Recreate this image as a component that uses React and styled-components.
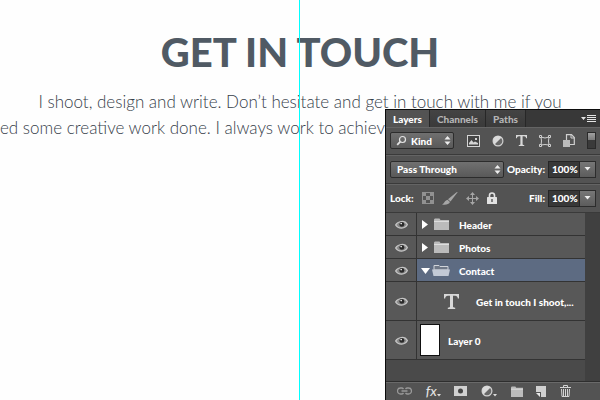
import React from 'react'
import styled, { createGlobalStyle } from 'styled-components'

const GlobalStyle = createGlobalStyle`
    * {
        box-sizing: border-box;
    }

    body {
        margin: 0;
        background: #fefefe;
        overflow: hidden;
    }

    button, select, input {
        font: inherit;
        color: inherit;
        margin: 0;
    }
`

const Page = styled.main`
    position: relative;
    height: 100vh;
    overflow: hidden;
    padding-top: 32px;
    font-family: Lato, sans-serif;
    color: #505a64;
`

const Title = styled.h1`
    margin: 0;
    font-size: 40px;
    font-weight: 900;
    line-height: 40px;
    text-align: center;
`

const Copy = styled.p`
    margin: 17px 0 0;
    font-size: 17px;
    font-weight: 300;
    line-height: 26px;
    text-align: center;
    white-space: nowrap;
    color: #36404a;
`

const Line = styled.span`
    display: block;
    text-align: ${({ $align }) => $align || 'center'};
`

const Guide = styled.div`
    position: absolute;
    top: 0;
    bottom: 0;
    left: 50%;
    margin-left: -1px;
    width: 1px;
    background: #00ffff;
`

// floats above the canvas, docked to the bottom right corner
const Panel = styled.section`
    position: absolute;
    top: 109px;
    right: 0;
    bottom: 0;
    width: 215px;
    display: flex;
    flex-direction: column;
    border-top: 1px solid #0c0c0c;
    border-left: 1px solid #0c0c0c;
    background: #535353;
    color: #fff;
    font-family: Lato, sans-serif;
    font-size: 10px;
    font-weight: 900;
    line-height: 14px;
`

const Tabs = styled.div`
    display: flex;
    height: 17px;
    background: #383838;
`

const Tab = styled.button`
    border: 0;
    border-right: 1px solid #272727;
    padding: 0 7px;
    background: ${({ $active }) => ($active ? '#535353' : 'linear-gradient(#444, #3a3a3a)')};
    color: ${({ $active }) => ($active ? '#fff' : '#b4b4b4')};
`

const MenuButton = styled.button`
    display: flex;
    align-items: center;
    margin-left: auto;
    border: 0;
    padding: 0 4px;
    background: none;
`

const Toolbar = styled.div`
    display: flex;
    align-items: center;
    justify-content: space-between;
    height: ${({ $height }) => $height};
    padding: 0 4px;
    border-bottom: 1px solid #3a3a3a;
    box-shadow: inset 0 1px #646464;
`

const Group = styled.div`
    display: flex;
    align-items: center;
    gap: ${({ $gap }) => $gap || '0'};
`

const Picker = styled.div`
    position: relative;
    width: ${({ $width }) => $width};

    svg {
        position: absolute;
        top: 3px;
        pointer-events: none;
    }
    svg:last-child {
        right: 3px;
    }
    svg:first-child:not(:last-child) {
        left: 6px;
    }
`

const Select = styled.select`
    display: block;
    appearance: none;
    width: 100%;
    height: 17px;
    padding: 0 12px 0 ${({ $inset }) => $inset};
    border: 1px solid #2c2c2c;
    border-radius: 2px;
    background: linear-gradient(#707070, #595959);
    outline: 0;
`

const Field = styled.div`
    display: flex;
    align-items: center;
    height: 17px;

    label {
        margin-right: 3px;
    }
    input {
        width: 32px;
        height: 17px;
        padding: 0 0 0 3px;
        border: 1px solid #252525;
        background: #383838;
    }
`

const Drop = styled.button`
    display: flex;
    align-items: center;
    justify-content: center;
    width: 16px;
    height: 17px;
    padding: 0;
    border: 1px solid #2c2c2c;
    border-left: 0;
    background: linear-gradient(#777, #5c5c5c);
`

const IconButton = styled.button`
    display: flex;
    align-items: center;
    border: 0;
    padding: 0;
    background: none;
    opacity: ${({ $dim }) => ($dim ? 0.6 : 1)};
`

const Switch = styled.button`
    width: 9px;
    height: 17px;
    padding: 0;
    border: 1px solid #2a2a2a;
    background: linear-gradient(#a0a0a0, #777 50%, #3a3a3a 50%);
`

const Layers = styled.ul`
    flex: 1;
    margin: 0;
    padding: 0 15px 0 0;
    list-style: none;
    background: linear-gradient(to left, #404040 15px, #4a4a4a 15px);
`

const Layer = styled.li`
    display: flex;
    height: ${({ $tall }) => ($tall ? '39px' : '23px')};
    border-bottom: 1px solid #333;
    background: #585858;
`

const Eye = styled.button`
    display: flex;
    align-items: center;
    justify-content: center;
    width: 31px;
    padding: 0;
    border: 0;
    border-right: 1px solid #333;
    background: none;
`

const LayerBody = styled.div`
    flex: 1;
    display: flex;
    align-items: center;
    padding-left: ${({ $indent }) => $indent || '4px'};
    background: ${({ $selected }) => ($selected ? '#5d6b82' : 'none')};
`

const FolderSlot = styled.span`
    display: flex;
    justify-content: center;
    width: 18px;
    margin-left: 2px;
`

const LayerName = styled.span`
    margin-left: ${({ $gap }) => $gap || '9px'};
    padding-top: 2px;
    white-space: nowrap;
`

const Thumb = styled.div`
    width: 20px;
    height: 32px;
    border: 1px solid #111;
    background: #fff;
`

const Footer = styled.footer`
    display: flex;
    align-items: center;
    gap: 10px;
    height: 19px;
    padding: 0 29px 0 11px;
    justify-content: space-between;
    border-top: 1px solid #2e2e2e;
    box-shadow: inset 0 1px #6a6a6a;
`

const UpDown = () => (
    <svg width="7" height="11" viewBox="0 0 7 11" fill="#eee">
        <path d="M3.5 1 6.5 4.5h-6zM3.5 10 6.5 6.5h-6z" />
    </svg>
)

const DownArrow = () => (
    <svg width="7" height="4" viewBox="0 0 7 4" fill="#eee">
        <path d="M.5 0h6l-3 3.5z" />
    </svg>
)

const MenuIcon = () => (
    <svg width="15" height="7" viewBox="0 0 15 7" fill="#e4e4e4">
        <path d="M0 2h5L2.5 5zM6 0h9v1H6zM6 2h9v1H6zM6 4h9v1H6zM6 6h9v1H6z" />
    </svg>
)

const SearchIcon = () => (
    <svg width="11" height="11" viewBox="0 0 11 11" fill="none" stroke="#e4e4e4">
        <circle cx="6.5" cy="4.5" r="3" strokeWidth="1.2" />
        <path d="M4.3 6.7 1.2 9.8" strokeWidth="1.8" />
    </svg>
)

const ImageIcon = () => (
    <svg width="13" height="12" viewBox="0 0 13 12">
        <rect x=".5" y=".5" width="12" height="11" fill="#454545" stroke="#d4d4d4" />
        <path d="M2 9.5V8l2.5-3 2 2.5 1.5-1L11 8v1.5z" fill="#d4d4d4" />
        <rect x="8" y="3" width="2" height="2" fill="#d4d4d4" />
    </svg>
)

const AdjustIcon = () => (
    <svg width="12" height="12" viewBox="0 0 12 12">
        <circle cx="6" cy="6" r="4.9" fill="#686868" stroke="#cfcfcf" strokeWidth="1.2" />
        <path d="M9.5 2.5A4.95 4.95 0 0 0 2.5 9.5z" fill="#dadada" />
    </svg>
)

const TypeIcon = ({ size = 11 }) => (
    <svg width={size} height={size} viewBox="0 0 15 15" fill="#d8d8d8">
        <path d="M0 0h15v4.5h-1.2C13.6 2.6 12.8 1.8 11 1.7H9v10.5c0 1 .4 1.4 2.2 1.5V15H3.8v-1.3C5.6 13.6 6 13.2 6 12.2V1.7H4C2.2 1.8 1.4 2.6 1.2 4.5H0z" />
    </svg>
)

const ShapeIcon = () => (
    <svg width="12" height="12" viewBox="0 0 12 12" fill="#484848" stroke="#d0d0d0">
        <path d="M2 2Q6 4 10 2Q9 6 10 10Q6 9 2 10Q3 6 2 2z" fill="none" />
        <path d="M.5.5h2v2h-2zM9.5.5h2v2h-2zM.5 9.5h2v2h-2zM9.5 9.5h2v2h-2z" />
    </svg>
)

const SmartIcon = () => (
    <svg width="12" height="13" viewBox="0 0 12 13">
        <path d="M3.5 6V.7H8.500L11.3 3.5V10.5H6.5" fill="none" stroke="#d0d0d0" strokeWidth="1.2" />
        <path d="M8 .5V4h3.5" fill="none" stroke="#d0d0d0" />
        <rect y="6" width="7" height="7" fill="#bbb" />
    </svg>
)

const CheckerIcon = () => (
    <svg width="12" height="12" viewBox="0 0 12 12">
        <rect x=".5" y=".5" width="11" height="11" fill="#555" stroke="#bbb" />
        <path d="M1 1h3v3H1zM8 1h3v3H8zM4 4h4v4H4zM1 8h3v3H1zM8 8h3v3H8z" fill="#bbb" />
    </svg>
)

const BrushIcon = () => (
    <svg width="16" height="13" viewBox="0 0 16 13" fill="#ddd">
        <path d="M15.8 0 8.5 9.5 6 7.3 14.5.3zM5.5 7.7 8 10C7 12.7 3.5 13 0 12.5 2.5 11.5 2.5 8.5 5.5 7.7z" />
    </svg>
)

const MoveIcon = () => (
    <svg width="13" height="13" viewBox="0 0 13 13">
        <path d="M6.5 2v9M2 6.5h9" stroke="#ddd" />
        <path d="M6.5 0 9 3H4zM6.5 13 9 10H4zM0 6.5 3 4v5zM13 6.5 10 4v5z" fill="#ddd" />
    </svg>
)

const LockIcon = () => (
    <svg width="10" height="12" viewBox="0 0 10 12">
        <path d="M2.5 6V3.5a2.5 2.5 0 0 1 5 0V6" fill="none" stroke="#e2e2e2" strokeWidth="1.6" />
        <rect y="5" width="10" height="7" rx=".5" fill="#e2e2e2" />
        <path d="M4.3 7h1.4v3H4.3z" fill="#555" />
    </svg>
)

const EyeIcon = () => (
    <svg width="13" height="9" viewBox="0 0 12 9" preserveAspectRatio="none">
        <path d="M.6 5C2.5 1 9-.2 11.4 4.5 9.5 9 3 9.3.6 5z" fill="#888" stroke="#c4c4c4" strokeWidth="1.2" />
        <circle cx="6.3" cy="4.4" r="2.3" fill="#292929" />
        <circle cx="5.7" cy="3.6" r=".8" fill="#eee" />
    </svg>
)

const Disclosure = ({ open }) => (
    <svg width="9" height="9" viewBox="0 0 9 9" fill="#fff">
        <path d={open ? 'M0 2h9L4.5 8z' : 'M1 0v9l6-4.5z'} />
    </svg>
)

const FolderIcon = ({ open, small }) => (
    <svg
        width={open ? 18 : small ? 12 : 15}
        height={small ? 11 : 12}
        viewBox={open ? '0 0 18 12' : '0 0 15 12'}
        preserveAspectRatio="none"
    >
        {open ? (
            <>
                <path d="M2 1.5h5l1 1h8V6H2z" fill="#6f7887" stroke="#d0d4da" />
                <path d="M0 5.5h18L16.5 12h-15z" fill="#c3cad6" />
            </>
        ) : (
            <>
                <path d="M0 1.5.8.5H5.500l1 1.5H15v10H0z" fill="#bbb" />
                <path d="M0 3h15v1H0z" fill="#ddd" />
            </>
        )}
    </svg>
)

const LinkIcon = () => (
    <svg width="15" height="8" viewBox="0 0 15 8" fill="none" stroke="#999" strokeWidth="1.3">
        <path d="M6.5 2C6 1.3 5.5 1 4.5 1h-1a3 3 0 0 0 0 6h1c1 0 1.5-.3 2-1M8.5 2c.5-.7 1-1 2-1h1a3 3 0 0 1 0 6h-1c-1 0-1.5-.3-2-1M4.5 4h6" />
    </svg>
)

const Fx = styled.span`
    font-style: italic;
    font-size: 14px;
    font-weight: 400;
    color: #e6e6e6;
`

const Corner = () => (
    <svg width="4" height="12" viewBox="0 0 4 12" fill="#ddd">
        <path d="M0 9h4l-2 2.5z" />
    </svg>
)

const MaskIcon = () => (
    <svg width="13" height="10" viewBox="0 0 13 10">
        <rect width="13" height="10" fill="#d0d0d0" />
        <circle cx="6.5" cy="5" r="2.5" fill="#444" />
    </svg>
)

const NewIcon = () => (
    <svg width="10" height="11" viewBox="0 0 10 11">
        <path d="M0 0h10v11H5V6H0z" fill="#d0d0d0" />
        <path d="M0 7h4v4z" fill="#e8e8e8" />
    </svg>
)

const TrashIcon = () => (
    <svg width="11" height="12" viewBox="0 0 11 12" fill="none" stroke="#d4d4d4">
        <path d="M0 2.5h11M3.5 2.5v-2h4v2M1.5 4l.5 7.5h7L9.5 4M3.5 4v7M5.5 4v7M7.5 4v7" />
    </svg>
)

const groups = [
    { name: 'Header' },
    { name: 'Photos' },
    { name: 'Contact', open: true },
]

const PercentField = ({ id, label }) => (
    <Field>
        <label htmlFor={id}>{label}</label>
        <input id={id} defaultValue="100%" />
        <Drop aria-label={`${label} slider`}>
            <DownArrow />
        </Drop>
    </Field>
)

const Visibility = () => (
    <Eye aria-label="Toggle visibility">
        <EyeIcon />
    </Eye>
)

const LayersPanel = () => (
    <Panel>
        <Tabs>
            <Tab $active>Layers</Tab>
            <Tab>Channels</Tab>
            <Tab>Paths</Tab>
            <MenuButton aria-label="Panel menu">
                <MenuIcon />
            </MenuButton>
        </Tabs>

        <Toolbar $height="28px">
            <Picker $width="64px">
                <SearchIcon />
                <Select $inset="20px" aria-label="Filter type">
                    <option>Kind</option>
                </Select>
                <UpDown />
            </Picker>
            <Group $gap="12px">
                <IconButton aria-label="Pixel layers"><ImageIcon /></IconButton>
                <IconButton aria-label="Adjustment layers"><AdjustIcon /></IconButton>
                <IconButton aria-label="Type layers"><TypeIcon /></IconButton>
                <IconButton aria-label="Shape layers"><ShapeIcon /></IconButton>
                <IconButton aria-label="Smart objects"><SmartIcon /></IconButton>
            </Group>
            <Switch aria-label="Toggle filter" />
        </Toolbar>

        <Toolbar $height="29px">
            <Picker $width="114px">
                <Select $inset="6px" aria-label="Blend mode">
                    <option>Pass Through</option>
                </Select>
                <UpDown />
            </Picker>
            <PercentField id="opacity" label="Opacity:" />
        </Toolbar>

        <Toolbar $height="29px">
            <Group $gap="8px">
                Lock:
                <IconButton $dim aria-label="Lock transparency"><CheckerIcon /></IconButton>
                <IconButton $dim aria-label="Lock pixels"><BrushIcon /></IconButton>
                <IconButton $dim aria-label="Lock position"><MoveIcon /></IconButton>
                <IconButton aria-label="Lock all"><LockIcon /></IconButton>
            </Group>
            <PercentField id="fill" label="Fill:" />
        </Toolbar>

        <Layers>
            {groups.map(({ name, open }) => (
                <Layer key={name}>
                    <Visibility />
                    <LayerBody $selected={open}>
                        <Disclosure open={open} />
                        <FolderSlot>
                            <FolderIcon open={open} />
                        </FolderSlot>
                        <LayerName>{name}</LayerName>
                    </LayerBody>
                </Layer>
            ))}
            <Layer $tall>
                <Visibility />
                <LayerBody $indent="27px">
                    <TypeIcon size={15} />
                    <LayerName $gap="17px">Get in touch I shoot,...</LayerName>
                </LayerBody>
            </Layer>
            <Layer $tall>
                <Visibility />
                <LayerBody $indent="3px">
                    <Thumb />
                    <LayerName $gap="8px">Layer 0</LayerName>
                </LayerBody>
            </Layer>
        </Layers>

        <Footer>
            <IconButton aria-label="Link layers"><LinkIcon /></IconButton>
            <IconButton aria-label="Layer style"><Fx>fx</Fx><Corner /></IconButton>
            <IconButton aria-label="Add mask"><MaskIcon /></IconButton>
            <IconButton aria-label="New adjustment"><AdjustIcon /><Corner /></IconButton>
            <IconButton aria-label="New group"><FolderIcon small /></IconButton>
            <IconButton aria-label="New layer"><NewIcon /></IconButton>
            <IconButton aria-label="Delete layer"><TrashIcon /></IconButton>
        </Footer>
    </Panel>
)

const App = () => (
    <>
        <GlobalStyle />
        <Page>
            <Title>GET IN TOUCH</Title>
            <Copy>
                <Line>I shoot, design and write. Don’t hesitate and get in touch with me if you</Line>
                <Line $align="left">ed some creative work done. I always work to achiev</Line>
            </Copy>
            <Guide />
            <LayersPanel />
        </Page>
    </>
)

export default App
